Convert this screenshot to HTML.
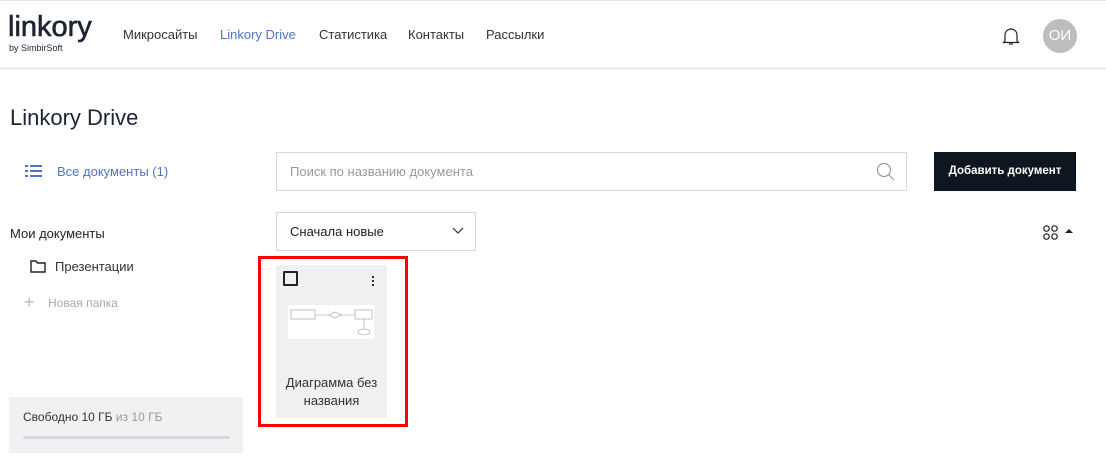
<!DOCTYPE html>
<html><head><meta charset="utf-8"><style>
*{margin:0;padding:0;box-sizing:border-box}
body{width:1106px;height:466px;background:#fff;font-family:"Liberation Sans",sans-serif;position:relative;overflow:hidden;color:#222}
.a{position:absolute}
</style></head><body>
<div class="a" style="left:0;top:0;width:1106px;height:1px;background:#e3e3e3"></div>
<div class="a" style="left:0;top:68px;width:1106px;height:1px;background:#e0e0e0"></div>
<div class="a" style="left:8px;top:12px;font-size:29px;color:#1b2430;line-height:30px;-webkit-text-stroke:0.6px #1b2430">linkory</div>
<div class="a" style="left:9px;top:43px;font-size:9px;color:#1b2430">by SimbirSoft</div>
<div class="a" style="left:123px;top:27px;font-size:13px;color:#333">Микросайты</div>
<div class="a" style="left:220px;top:27px;font-size:13px;color:#4f73c9">Linkory Drive</div>
<div class="a" style="left:319px;top:27px;font-size:13px;color:#333">Статистика</div>
<div class="a" style="left:408px;top:27px;font-size:13px;color:#333">Контакты</div>
<div class="a" style="left:486px;top:27px;font-size:13px;color:#333">Рассылки</div>
<svg class="a" style="left:1002px;top:26px" width="18" height="20" viewBox="0 0 18 20"><path d="M3 15V9a6 6 0 0 1 12 0v6l1.5 1.5h-15z" fill="none" stroke="#222" stroke-width="1.2"/><path d="M7 18h4" stroke="#222" stroke-width="1.2"/></svg>
<div class="a" style="left:1043px;top:19px;width:34px;height:34px;border-radius:50%;background:#bdbdbd;color:#fff;font-size:15px;text-align:center;line-height:34px">ОИ</div>
<div class="a" style="left:10px;top:105px;font-size:22px;color:#1b2430">Linkory Drive</div>
<svg class="a" style="left:25px;top:165px" width="17" height="13"><g fill="#4f73c9"><rect x="0" y="0" width="3" height="2"/><rect x="5" y="0" width="12" height="2"/><rect x="0" y="5" width="3" height="2"/><rect x="5" y="5" width="12" height="2"/><rect x="0" y="10" width="3" height="2"/><rect x="5" y="10" width="12" height="2"/></g></svg>
<div class="a" style="left:57px;top:164px;font-size:13px;color:#4f73c9">Все документы (1)</div>
<div class="a" style="left:10px;top:226px;font-size:13px;color:#222">Мои документы</div>
<svg class="a" style="left:30px;top:260px" width="16" height="13"><path d="M1 1h5l1.5 2H15v9H1z" fill="none" stroke="#222" stroke-width="1.4"/></svg>
<div class="a" style="left:55px;top:259px;font-size:13px;color:#333">Презентации</div>
<div class="a" style="left:24px;top:293px;font-size:18px;color:#bbb;line-height:18px">+</div>
<div class="a" style="left:48px;top:296px;font-size:12px;color:#aaa">Новая папка</div>
<div class="a" style="left:9px;top:397px;width:234px;height:56px;background:#f0f1f3"></div>
<div class="a" style="left:23px;top:410px;font-size:12px;color:#333">Свободно 10 ГБ <span style="color:#999">из 10 ГБ</span></div>
<div class="a" style="left:23px;top:436px;width:207px;height:3px;border-radius:2px;background:#d5d7da"></div>
<div class="a" style="left:276px;top:152px;width:631px;height:39px;border:1px solid #d8d8d8"></div>
<div class="a" style="left:290px;top:164px;font-size:13px;color:#999">Поиск по названию документа</div>
<svg class="a" style="left:876px;top:162px" width="20" height="20"><circle cx="8" cy="8" r="6.5" fill="none" stroke="#999" stroke-width="1.2"/><path d="M13 13l5 5" stroke="#999" stroke-width="1.2"/></svg>
<div class="a" style="left:934px;top:152px;width:142px;height:39px;background:#0e1620;color:#fff;font-size:11.5px;font-weight:bold;text-align:center;line-height:39px">Добавить документ</div>
<div class="a" style="left:276px;top:212px;width:200px;height:39px;border:1px solid #d8d8d8"></div>
<div class="a" style="left:290px;top:224px;font-size:13px;color:#222">Сначала новые</div>
<svg class="a" style="left:452px;top:227px" width="12" height="8"><path d="M1 1l5 5 5-5" fill="none" stroke="#333" stroke-width="1.2"/></svg>
<svg class="a" style="left:1043px;top:225px" width="16" height="16" fill="none" stroke="#222" stroke-width="1.2"><circle cx="3.5" cy="3.5" r="2.7"/><circle cx="11.5" cy="3.5" r="2.7"/><circle cx="3.5" cy="11.5" r="2.7"/><circle cx="11.5" cy="11.5" r="2.7"/></svg>
<svg class="a" style="left:1065px;top:228px" width="8" height="6"><path d="M0 5l4-4 4 4z" fill="#222"/></svg>
<div class="a" style="left:258px;top:256px;width:150px;height:171px;border:3px solid #f00"></div>
<div class="a" style="left:276px;top:265px;width:111px;height:153px;background:#eef0f2"></div>
<div class="a" style="left:283px;top:271px;width:15px;height:15px;border:2px solid #222;border-radius:1px"></div>
<div class="a" style="left:372px;top:276px;width:2px;height:2px;background:#333;box-shadow:0 4px #333,0 8px #333"></div>
<div class="a" style="left:288px;top:305px;width:86px;height:34px;background:#fff"></div>
<svg class="a" style="left:288px;top:305px" width="86" height="34" fill="none" stroke="#999" stroke-width=".6"><rect x="3" y="5" width="24" height="9"/><path d="M27 10h14M53 10h14"/><path d="M41 10l6-3 6 3-6 3z"/><rect x="67" y="5" width="17" height="9"/><path d="M76 14v10"/><ellipse cx="76" cy="27" rx="6" ry="3"/></svg>
<div class="a" style="left:276px;top:374px;width:111px;text-align:center;font-size:13px;line-height:18px;color:#333">Диаграмма без<br>названия</div>
</body></html>
